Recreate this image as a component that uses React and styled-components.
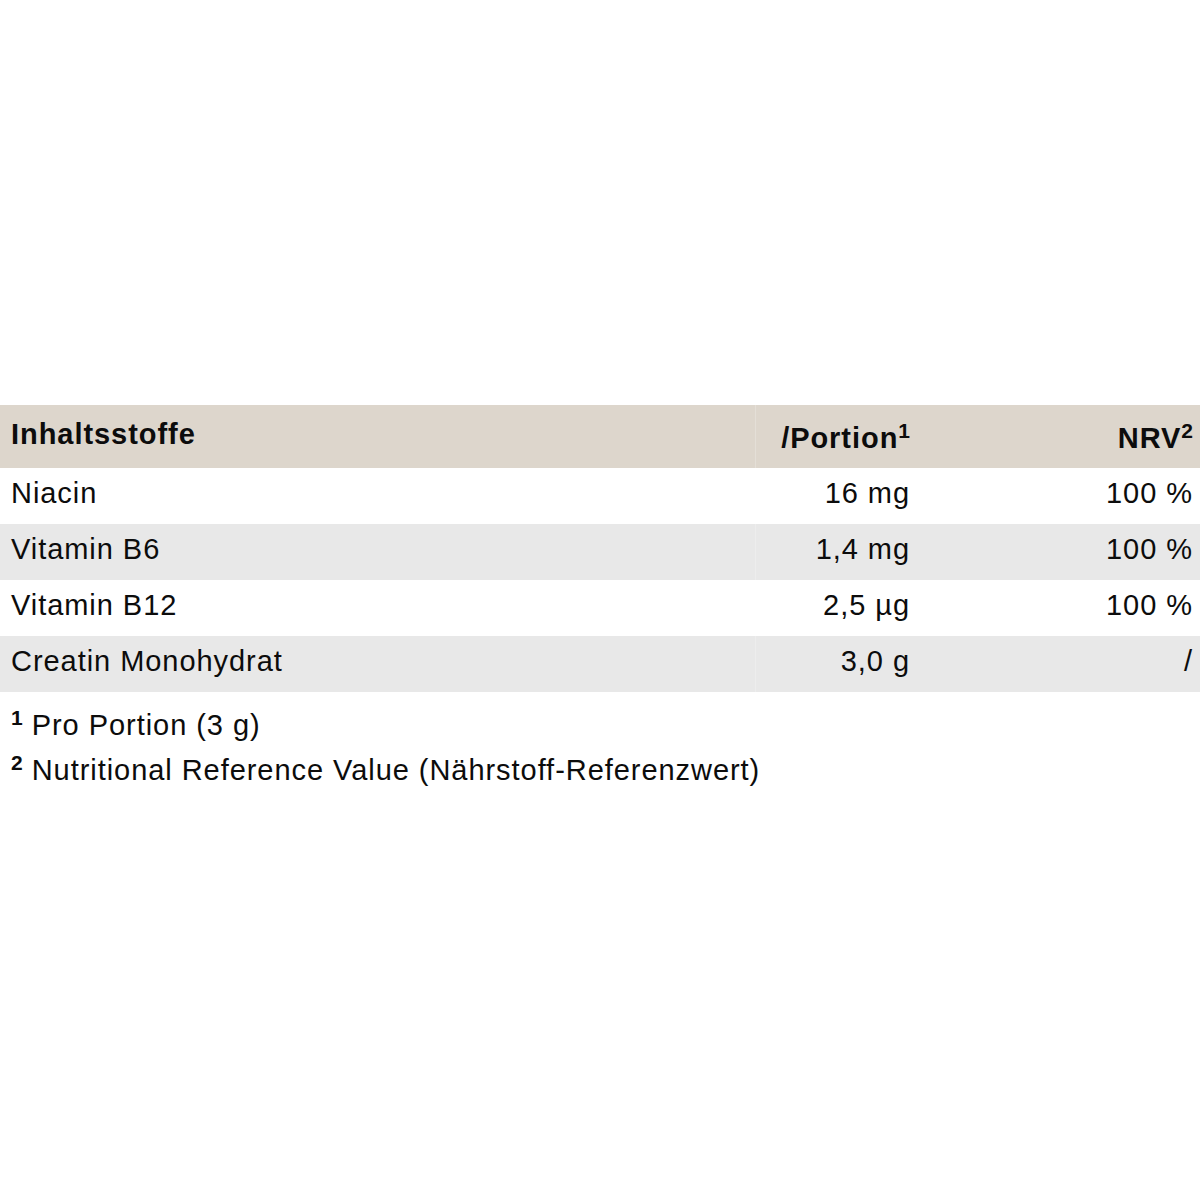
import React from "react";
import styled, { createGlobalStyle } from "styled-components";

const Global = createGlobalStyle`
  html, body { margin: 0; padding: 0; background: #ffffff; }
  body { font-family: "Liberation Sans", Arial, Helvetica, sans-serif; color: #0c0c0c; }
`;

const Page = styled.div`
  width: 1200px;
  height: 1200px;
  padding-top: 405px;
  box-sizing: border-box;
  background: #ffffff;
`;

const Table = styled.div`
  display: flex;
  flex-direction: column;
  width: 1200px;
`;

const Row = styled.div`
  display: grid;
  grid-template-columns: 755px 165px 1fr;
  height: ${(p) => (p.$head ? 63 : 56)}px;
  background: ${(p) =>
    p.$head ? "#ddd6cc" : p.$shade ? "#e8e8e8" : "#ffffff"};
`;

const Cell = styled.div`
  box-sizing: border-box;
  font-size: 29px;
  line-height: normal;
  letter-spacing: 0.95px;
  white-space: nowrap;
  text-align: ${(p) => (p.$right ? "right" : "left")};
  padding: ${(p) => p.$top ?? 8.5}px ${(p) => p.$pr ?? 10}px 0 ${(p) => p.$pl ?? 11}px;
  font-weight: ${(p) => (p.$bold ? 700 : 400)};
  border-left: ${(p) => (p.$seam ? "1px solid rgba(255,255,255,0.22)" : "none")};
`;

const Sup = styled.sup`
  font-size: 21px;
  font-weight: 700;
  letter-spacing: 0;
  line-height: 0;
  position: relative;
  vertical-align: baseline;
  top: -0.5em;
`;

const Notes = styled.div`
  padding: 11px 0 0 11px;
  font-size: 29px;
  line-height: 45px;
  letter-spacing: 0.95px;
`;

const Note = styled.div`
  white-space: nowrap;
`;

const rows = [
  ["Niacin", "16 mg", "100 %"],
  ["Vitamin B6", "1,4 mg", "100 %"],
  ["Vitamin B12", "2,5 µg", "100 %"],
  ["Creatin Monohydrat", "3,0 g", "/"],
];

export default function App() {
  return (
    <Page>
      <Global />
      <Table>
        <Row $head>
          <Cell $bold $top={12.5}>Inhaltsstoffe</Cell>
          <Cell $bold $right $seam $top={17} $pr={10}>
            /Portion<Sup>1</Sup>
          </Cell>
          <Cell $bold $right $top={17} $pr={7}>
            NRV<Sup>2</Sup>
          </Cell>
        </Row>
        {rows.map((r, i) => (
          <Row key={r[0]} $shade={i % 2 === 1}>
            <Cell>{r[0]}</Cell>
            <Cell $right $seam={i % 2 === 1} $pr={10}>{r[1]}</Cell>
            <Cell $right $pr={7}>{r[2]}</Cell>
          </Row>
        ))}
      </Table>
      <Notes>
        <Note>
          <Sup>1</Sup> Pro Portion (3 g)
        </Note>
        <Note>
          <Sup>2</Sup> Nutritional Reference Value (Nährstoff-Referenzwert)
        </Note>
      </Notes>
    </Page>
  );
}
